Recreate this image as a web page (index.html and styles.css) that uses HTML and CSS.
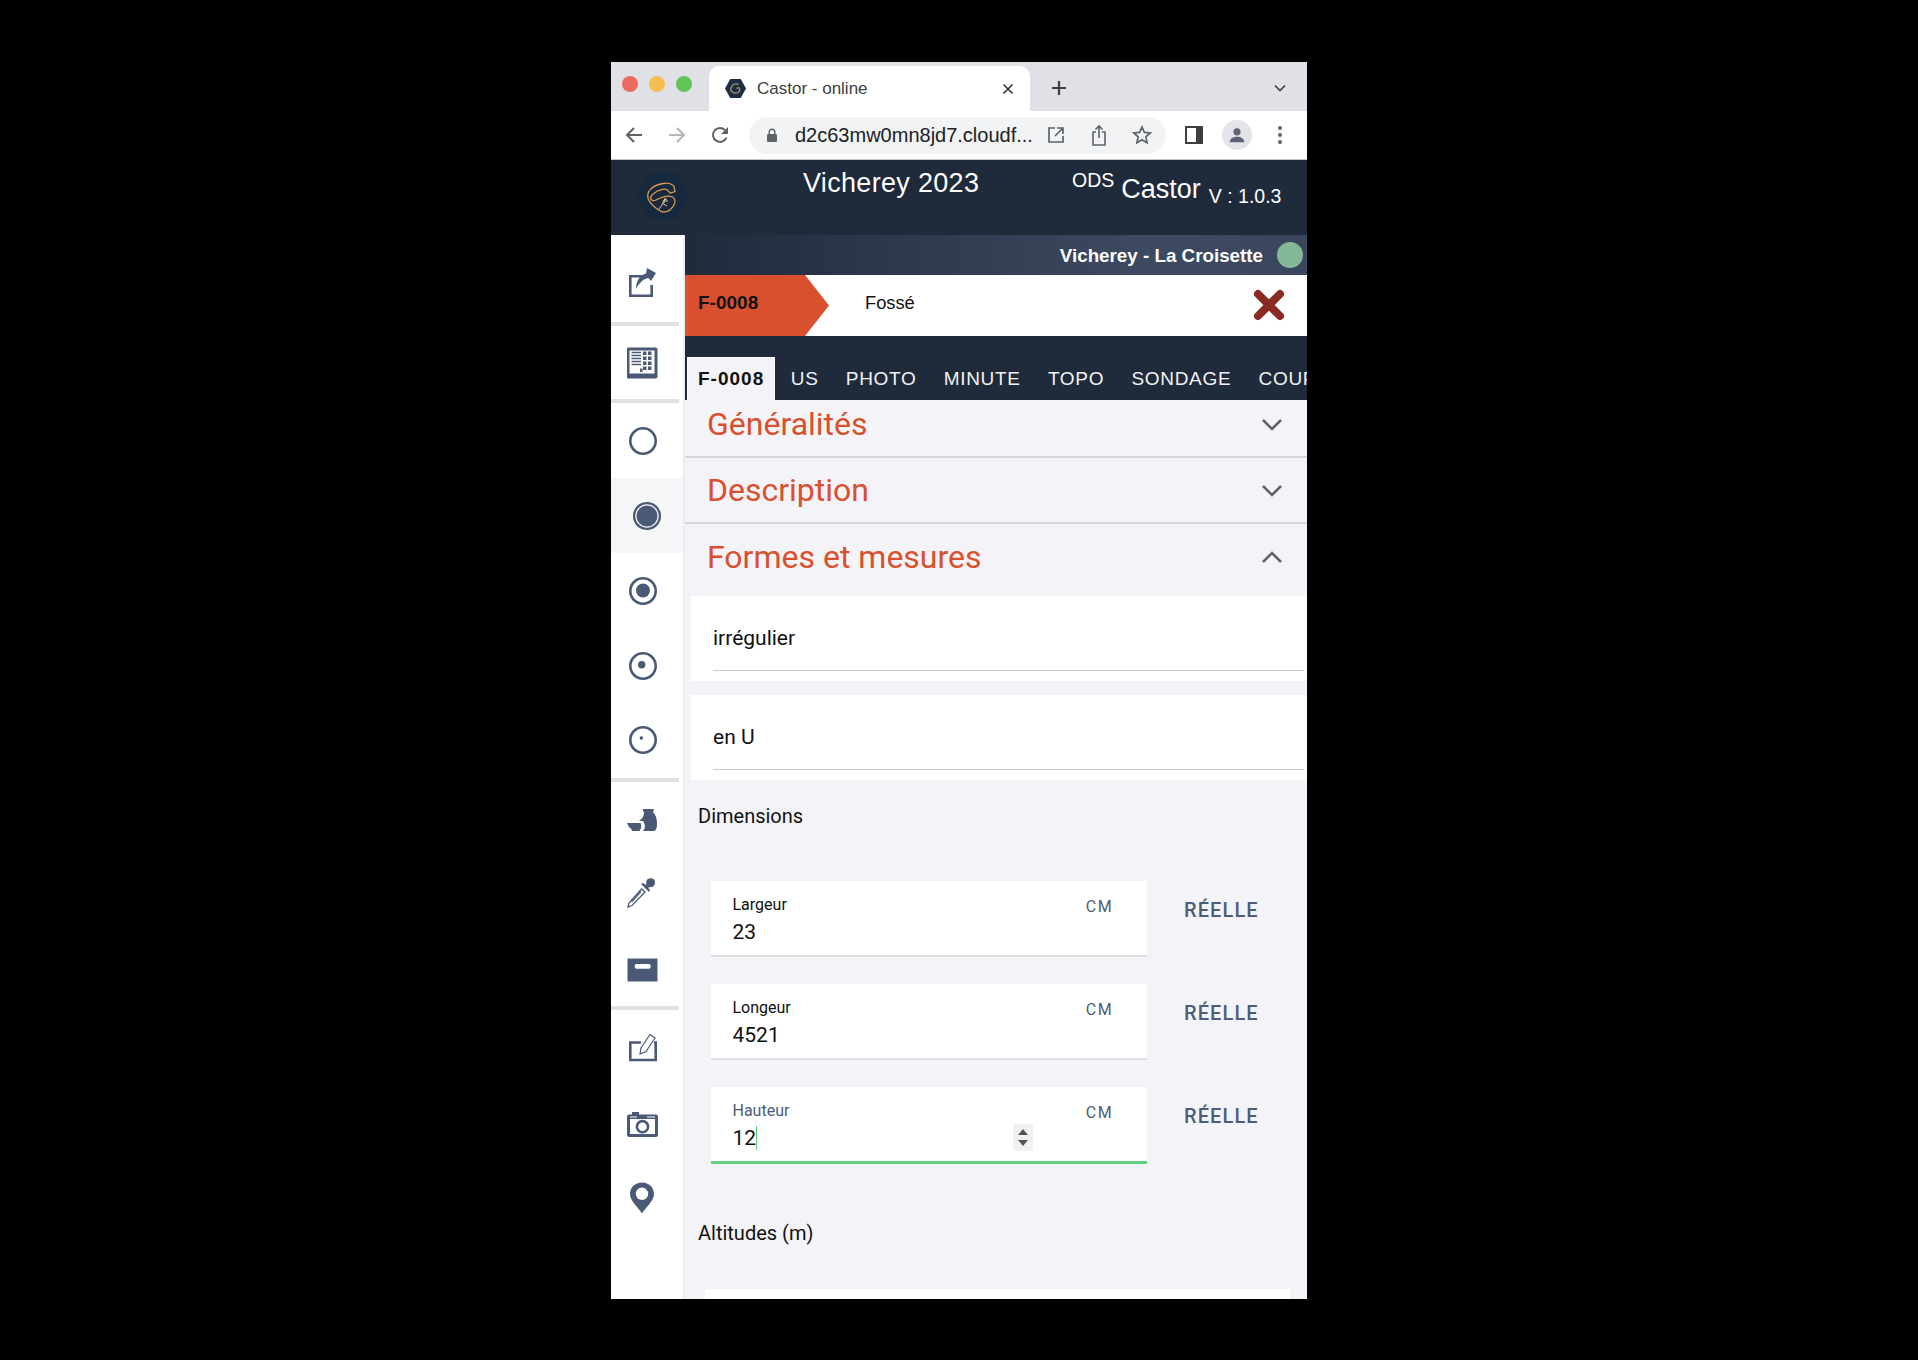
FILE: index.html
```html
<!DOCTYPE html>
<html lang="fr">
<head>
<meta charset="utf-8">
<title>Castor - online</title>
<link rel="stylesheet" href="styles.css">
</head>
<body>
<div class="window">
  <div class="tabstrip">
    <div class="lights"><i class="light red"></i><i class="light yellow"></i><i class="light green"></i></div>
    <div class="browser-tab">
      <svg class="favicon" viewBox="0 0 20 20"><path d="M5 1h10l5 9-5 9H5L0 10z" fill="#1b2e46"/><path d="M13 6c-3-1-6 0-7 3-1 2 0 4 2 5 3 1 6 0 6-3 0-2-2-2-3-1" fill="none" stroke="#a88a62" stroke-width="1.400"/></svg>
      <span class="browser-tab-title">Castor - online</span>
      <svg class="tab-close" viewBox="0 0 12 12"><path d="M1.500 1.500l9 9M10.500 1.500l-9 9" stroke="#333" stroke-width="1.600"/></svg>
    </div>
    <svg class="new-tab" viewBox="0 0 16 16"><path d="M8 1v14M1 8h14" stroke="#3c4043" stroke-width="2.200"/></svg>
    <svg class="tab-menu" viewBox="0 0 12 8"><path d="M1 1.500l5 5 5-5" fill="none" stroke="#3c4043" stroke-width="1.700"/></svg>
  </div>
  <div class="toolbar">
    <svg class="tool back" viewBox="0 0 20 20"><path d="M18 10H3M10 3l-7 7 7 7" fill="none" stroke="#5f6368" stroke-width="2"/></svg>
    <svg class="tool forward" viewBox="0 0 20 20"><path d="M2 10h15M10 3l7 7-7 7" fill="none" stroke="#b4b7bb" stroke-width="2"/></svg>
    <svg class="tool reload" viewBox="0 0 20 20"><path d="M16.500 12.500A7 7 0 1 1 15 5" fill="none" stroke="#5f6368" stroke-width="2"/><path d="M18 2v7h-7z" fill="#5f6368"/></svg>
    <div class="omnibox">
      <svg class="lock" viewBox="0 0 12 14"><path d="M3.200 6V4a2.800 2.800 0 0 1 5.600 0v2" fill="none" stroke="#5f6368" stroke-width="1.400"/><rect x="1" y="6" width="10" height="8" rx="1.200" fill="#5f6368"/></svg>
      <span class="url">d2c63mw0mn8jd7.cloudf...</span>
      <svg class="omni-icon open" viewBox="0 0 18 18"><path d="M8 2H2v14h14v-6M10 2h6v6M16 2L8 10" fill="none" stroke="#5f6368" stroke-width="1.700"/></svg>
      <svg class="omni-icon share" viewBox="0 0 16 22"><path d="M5 8H2v13h12V8h-3M8 14V2M4.500 5.500L8 2l3.500 3.500" fill="none" stroke="#5f6368" stroke-width="1.600"/></svg>
      <svg class="omni-icon star" viewBox="0 0 20 20"><path d="M10 2l2.400 5.400 5.800.6-4.400 3.900 1.300 5.800L10 14.700l-5.100 3 1.300-5.800L1.800 8l5.800-.6z" fill="none" stroke="#5f6368" stroke-width="1.700"/></svg>
    </div>
    <svg class="tool panel" viewBox="0 0 18 18"><path d="M1 1h16v16H1z" fill="none" stroke="#3c4043" stroke-width="2"/><path d="M11 1h6v16h-6z" fill="#3c4043"/></svg>
    <div class="avatar"><svg viewBox="0 0 20 20"><circle cx="10" cy="6.500" r="4" fill="#5b6475"/><path d="M2 18c0-4 4-6 8-6s8 2 8 6z" fill="#5b6475"/></svg></div>
    <svg class="tool dots" viewBox="0 0 4 20"><circle cx="2" cy="3" r="2" fill="#5f6368"/><circle cx="2" cy="10" r="2" fill="#5f6368"/><circle cx="2" cy="17" r="2" fill="#5f6368"/></svg>
  </div>

  <header class="app-header">
    <svg class="logo" viewBox="0 0 52 46">
      <path d="M13 0h26l13 23-13 23H13L0 23z" fill="#17293f"/>
      <path d="M36.700 12.700C34 10.500 30 9.500 26 10.500 20 11.500 14 14 11.500 19 9 24 11 28 16.700 33.300 20 36 23 38.500 26.700 39 31 39 35 36 37.500 31 39 27 37 23.500 33.300 23.300 29 22.800 24 24.500 19 27 16 28.500 14 27 13.500 25 13.500 22 17 20 21 17.800 25 16 28 15.500 30 16.700L33.300 20 38 18.500 36.700 12.700z" fill="none" stroke="#d99a4e" stroke-width="1.300"/>
      <path d="M22 36l3-4 2-5 3-1M25 30l5 3M26 28h5M28 25l-1 5" fill="none" stroke="#e6c08e" stroke-width="1"/>
    </svg>
    <span class="app-title">Vicherey 2023</span>
    <span class="ods">ODS</span>
    <span class="castor">Castor</span>
    <span class="version">V : 1.0.3</span>
  </header>

  <div class="app-body">
    <nav class="sidebar">
      <div class="nav-item">
        <svg class="nav-icon" viewBox="0 0 32 32"><path d="M15 9.300H3.300v19.400h21.400V18" fill="none" stroke="#4a5a76" stroke-width="2.600"/><path d="M9 22C9 14 13 8 19 6.500L20 1l9 5-5 8-2.500-3C16 12 12 16 9 22z" fill="#4a5a76"/></svg>
      </div>
      <div class="nav-sep"></div>
      <div class="nav-item">
        <svg class="nav-icon" viewBox="0 0 32 32"><g transform="translate(-1 0)"><rect x=".5" y=".5" width="31" height="31" rx="2" fill="#4a5a76"/><rect x="3.500" y="3.500" width="25" height="23" fill="#fff"/><path d="M5.500 5.500H15M5.500 8.500H15M5.500 11.500H15M5.500 14.500H15M5.500 17.500H15" stroke="#4a5a76" stroke-width="1.500"/><path d="M17 4.500h3.500V8H17zM22 4.500h3.500V8H22zM17 9.500h3.500V13H17zM22 9.500h3.500V13H22zM17 14.500h3.500V18H17zM22 14.500h3.500V18H22zM17 19.500h3.500V23H17zM22 19.500h3.500V23H22zM14 21.500h2.500V25H14z" fill="#4a5a76"/></g></svg>
      </div>
      <div class="nav-sep"></div>
      <div class="nav-item">
        <svg class="nav-icon" viewBox="0 0 32 32"><circle cx="16" cy="16" r="12.700" fill="none" stroke="#4a5a76" stroke-width="2.600"/></svg>
      </div>
      <div class="nav-item active">
        <svg class="nav-icon" viewBox="0 0 32 32"><circle cx="16" cy="16" r="12.900" fill="none" stroke="#4a5a76" stroke-width="2.300"/><circle cx="16" cy="16" r="10.500" fill="#4a5a76"/></svg>
      </div>
      <div class="nav-item">
        <svg class="nav-icon" viewBox="0 0 32 32"><circle cx="16" cy="16" r="12.700" fill="none" stroke="#4a5a76" stroke-width="2.600"/><circle cx="16" cy="15.500" r="7" fill="#4a5a76"/></svg>
      </div>
      <div class="nav-item">
        <svg class="nav-icon" viewBox="0 0 32 32"><circle cx="16" cy="16" r="12.700" fill="none" stroke="#4a5a76" stroke-width="2.600"/><circle cx="14.700" cy="14.700" r="3.700" fill="#4a5a76"/></svg>
      </div>
      <div class="nav-item">
        <svg class="nav-icon" viewBox="0 0 32 32"><circle cx="16" cy="16" r="12.700" fill="none" stroke="#4a5a76" stroke-width="2.600"/><circle cx="14.400" cy="14" r="1.800" fill="#4a5a76"/></svg>
      </div>
      <div class="nav-sep"></div>
      <div class="nav-item">
        <svg class="nav-icon" viewBox="0 0 32 32"><path d="M15.500 6H27l-1 3c3 3 4 7 4 12 0 4-1 6-2.500 7H16c3-3 2-8 0-10h-4c3-2 5-5 5-8z" fill="#4a5a76"/><path d="M0 20h13.500c1.500 3 .5 6-1 8H5l-1-2.500C2 25 1 22 0 20z" fill="#4a5a76"/></svg>
      </div>
      <div class="nav-item">
        <svg class="nav-icon" viewBox="0 0 32 32"><g transform="translate(-3 0)"><path d="M17.500 13L5 27l-1 4 4-1.500L21 16z" fill="#fff" stroke="#4a5a76" stroke-width="1.300"/><path d="M7.500 26L17 15.500" stroke="#4a5a76" stroke-width="1.200"/><path d="M17 8l2-1 3 2 .5-4.500C24 2 28 1.500 30 3.500c2 2.500 1 6.500-2 7.500l-4 .5 2 2.500-1 2z" fill="#4a5a76"/></g></svg>
      </div>
      <div class="nav-item">
        <svg class="nav-icon" viewBox="0 0 32 32"><path d="M.5 6.500H30.500V29.500H.5z" fill="#4a5a76"/><rect x="7.700" y="12" width="16" height="4.700" rx="2" fill="#fff"/></svg>
      </div>
      <div class="nav-sep"></div>
      <div class="nav-item">
        <svg class="nav-icon" viewBox="0 0 32 32"><path d="M14 10.500H3.300V28h25.400V10.500H27" fill="none" stroke="#4a5a76" stroke-width="2.600"/><path d="M13 22l1-6 9-13.500 5 3.500-9 13.500z" fill="#fff" stroke="#4a5a76" stroke-width="1.200"/></svg>
      </div>
      <div class="nav-item">
        <svg class="nav-icon" viewBox="0 0 32 32"><path d="M2 7.500h3V5h7v2.500h17a2 2 0 0 1 2 2V28a2 2 0 0 1-2 2H2a2 2 0 0 1-2-2V9.500a2 2 0 0 1 2-2z" fill="#4a5a76"/><path d="M3 12h25v15H3z" fill="#fff"/><path d="M3 10h7M20 10h8" stroke="#fff" stroke-width="1"/><circle cx="15.500" cy="19.700" r="5.600" fill="#fff" stroke="#4a5a76" stroke-width="2.600"/></svg>
      </div>
      <div class="nav-item">
        <svg class="nav-icon" viewBox="0 0 32 32"><path d="M15 .5C8 .5 3 5.500 3 12c0 7 8 13 12 19.500C19 25 27 19 27 12 27 5.500 22 .5 15 .5z" fill="#4a5a76"/><circle cx="15" cy="11.800" r="6.200" fill="#fff"/></svg>
      </div>
    </nav>

    <main class="content">
      <div class="site-bar">
        <span class="site-name">Vicherey - La Croisette</span>
        <i class="site-dot"></i>
      </div>
      <div class="record-bar">
        <div class="record-id">F-0008</div>
        <span class="record-type">Fossé</span>
        <svg class="record-close" viewBox="0 0 32 32"><path d="M5 5l22 22M27 5L5 27" stroke="#8a2b23" stroke-width="8" stroke-linecap="round"/></svg>
      </div>
      <div class="tabs">
        <span class="tab current">F-0008</span>
        <span class="tab">US</span>
        <span class="tab">PHOTO</span>
        <span class="tab">MINUTE</span>
        <span class="tab">TOPO</span>
        <span class="tab">SONDAGE</span>
        <span class="tab">COUPE</span>
      </div>

      <section class="panel-head first">
        <h2>Généralités</h2>
        <svg class="chev" viewBox="0 0 22 13"><path d="M2 2l9 9 9-9" fill="none" stroke="#5f6368" stroke-width="2.600"/></svg>
      </section>
      <section class="panel-head">
        <h2>Description</h2>
        <svg class="chev" viewBox="0 0 22 13"><path d="M2 2l9 9 9-9" fill="none" stroke="#5f6368" stroke-width="2.600"/></svg>
      </section>
      <section class="panel-head open-panel">
        <h2>Formes et mesures</h2>
        <svg class="chev" viewBox="0 0 22 13"><path d="M2 11l9-9 9 9" fill="none" stroke="#5f6368" stroke-width="2.600"/></svg>
      </section>

      <div class="select-field"><span class="select-value">irrégulier</span></div>
      <div class="select-field second"><span class="select-value">en U</span></div>

      <div class="group-label">Dimensions</div>

      <div class="measure tight">
        <div class="measure-card">
          <div class="measure-input"><label>Largeur</label><span class="measure-value">23</span></div>
          <span class="unit">CM</span>
        </div>
        <span class="measure-kind">RÉELLE</span>
      </div>
      <div class="measure">
        <div class="measure-card">
          <div class="measure-input"><label>Longeur</label><span class="measure-value">4521</span></div>
          <span class="unit">CM</span>
        </div>
        <span class="measure-kind">RÉELLE</span>
      </div>
      <div class="measure">
        <div class="measure-card focused">
          <div class="measure-input"><label>Hauteur</label><span class="measure-value"><span class="caret-text">12</span></span></div>
          <div class="spinner"><i class="up"></i><i class="down"></i></div>
          <span class="unit">CM</span>
        </div>
        <span class="measure-kind">RÉELLE</span>
      </div>

      <div class="group-label altitudes">Altitudes (m)</div>
      <div class="next-card"></div>
    </main>
  </div>
</div>
</body>
</html>
```
FILE: styles.css
```css
* { box-sizing: border-box; }
html, body { margin: 0; background: #000; }
body { padding: 62px 0 61px 611px; font-family: "Liberation Sans", Arial, sans-serif; }
.window { width: 696px; height: 1237px; background: #fff; overflow: hidden; display: flex; flex-direction: column; }

.tabstrip { height: 49px; background: #dfe1e6; display: flex; align-items: flex-start; flex: none; }
.lights { display: flex; gap: 11px; padding: 14px 0 0 11px; width: 98px; flex: none; }
.light { width: 16px; height: 16px; border-radius: 50%; display: block; }
.red { background: #ec6a5e; } .yellow { background: #f4bf4f; } .green { background: #61c554; }
.browser-tab { margin-top: 4px; width: 321px; height: 45px; background: #fff; border-radius: 10px 10px 0 0; display: flex; align-items: center; padding: 0 16px 0 16px; flex: none; }
.favicon { width: 21px; height: 21px; flex: none; }
.browser-tab-title { font-size: 17px; color: #3c4043; margin-left: 11px; flex: 1; }
.tab-close { width: 12px; height: 12px; }
.new-tab { width: 16px; height: 16px; margin: 18px 0 0 21px; flex: none; }
.tab-menu { width: 12px; height: 8px; margin: 22px 0 0 207px; flex: none; }

.toolbar { height: 49px; background: #fff; border-bottom: 1px solid #c4c7cb; display: flex; align-items: center; flex: none; padding-left: 13px; }
.tool { flex: none; }
.back, .forward, .reload { width: 20px; height: 20px; margin-right: 23px; }
.omnibox { width: 417px; height: 37px; border-radius: 19px; background: #f1f3f4; display: flex; align-items: center; padding-left: 17px; flex: none; margin-left: -4px; }
.lock { width: 12px; height: 14px; flex: none; }
.url { font-size: 20px; color: #202124; margin-left: 17px; width: 236px; white-space: nowrap; flex: none; }
.omni-icon { flex: none; }
.open { width: 18px; height: 18px; margin-left: 16px; }
.share { width: 16px; height: 22px; margin-left: 26px; }
.star { width: 20px; height: 20px; margin-left: 25px; }
.panel { width: 18px; height: 18px; margin-left: 19px; }
.avatar { width: 30px; height: 30px; border-radius: 50%; background: #e2e4e9; margin-left: 19px; padding: 6px; flex: none; }
.avatar svg { display: block; width: 18px; height: 18px; }
.dots { width: 4px; height: 20px; margin-left: 26px; }

.app-header { height: 75px; background: #1f2a3b; display: flex; flex: none; color: #fff; white-space: nowrap; align-items: flex-start; }
.logo { width: 52px; height: 46px; margin: 13px 0 0 26px; flex: none; }
.app-title { font-size: 27px; letter-spacing: .32px; margin: 8px 0 0 114px; width: 269px; flex: none; }
.ods { font-size: 19.500px; margin-top: 9px; }
.castor { font-size: 27px; margin: 14px 0 0 7px; }
.version { font-size: 19.500px; margin: 25px 0 0 8px; }

.app-body { flex: 1; display: flex; min-height: 0; }
.sidebar { width: 74px; flex: none; background: #fff; border-right: 2px solid #ecedf1; display: grid;
  grid-template-rows: 87px 4px 73px 4px 75px 75px 76px 73px 76px 4px 73px 74px 77px 4px 75px 76px 73px; align-content: start; }
.nav-item { display: flex; align-items: center; justify-content: center; padding-right: 8px; }
.nav-item:first-child { padding-top: 8px; }
.nav-item.active { padding-right: 0; background: #f6f6f8; }
.nav-sep { background: #e1e1e1; margin-right: 4px; }
.nav-icon { width: 32px; height: 32px; display: block; flex: none; }

.content { flex: 1; min-width: 0; background: #f4f4f8; overflow: hidden; font-family: Roboto, sans-serif; }
.site-bar { height: 40px; background: linear-gradient(90deg, #1f2a3b 0%, #3d4a61 75%, #3a465c 100%); display: flex; align-items: center; justify-content: flex-end; padding: 2px 4px 0 0; font-family: "Liberation Sans", sans-serif; }
.site-name { font-size: 18.800px; font-weight: 700; color: #fff; }
.site-dot { width: 26px; height: 26px; border-radius: 50%; background: #84b898; margin: -2px 0 0 14px; }
.record-bar { height: 61px; background: #fff; display: flex; align-items: center; position: relative; font-family: "Liberation Sans", sans-serif; padding-right: 22px; }
.record-id { width: 144px; height: 100%; background: #d9502e; clip-path: polygon(0 0, 120px 0, 100% 50%, 120px 100%, 0 100%); font-size: 19px; font-weight: 700; color: #111; display: flex; align-items: center; padding: 0 0 6px 13px; flex: none; }
.record-type { font-size: 18.300px; color: #111; margin: 0 0 6px 36px; flex: 1; }
.record-close { width: 32px; height: 32px; flex: none; margin-bottom: 2px; }
.tabs { height: 64px; background: #1f2a3b; display: flex; align-items: flex-end; overflow: hidden; padding-left: 2px; font-family: "Liberation Sans", sans-serif; white-space: nowrap; }
.tab { font-size: 19px; letter-spacing: .7px; color: #f2f2f4; padding: 0 13.600px; height: 43px; display: flex; align-items: center; flex: none; }
.tab.current { background: #f4f4f8; color: #111; font-weight: 700; letter-spacing: 1px; padding: 0 11px 0 10px; margin-right: 2px; border-top: 1px solid #fff; border-left: 1px solid #fff; }

.panel-head { height: 66px; display: flex; align-items: center; justify-content: space-between; padding: 0 24px 0 18px; border-bottom: 2px solid #d6d6da; }
.panel-head.first { height: 58px; padding-bottom: 8px; }
.panel-head.open-panel { border-bottom: 0; height: 72px; padding-bottom: 6px; }
.panel-head h2 { margin: 0 0 0 4px; font-size: 32px; font-weight: 400; color: #d9502e; }
.chev { width: 22px; height: 13px; flex: none; }

.select-field { height: 85px; margin-left: 6px; background: #fff; padding: 0 3px 0 22px; }
.select-field.second { margin-top: 14px; }
.select-value { display: block; height: 74.500px; line-height: 84px; border-bottom: 1px solid #c9c9cc; font-size: 21px; color: #111; }

.group-label { font-size: 20px; color: #111; padding: 24px 0 0 13px; height: 101px; }
.group-label.altitudes { padding-top: 31px; height: 99.500px; }
.measure { display: flex; align-items: flex-start; height: 103px; padding-left: 26px; }
.measure.tight { height: 102.500px; }
.measure-card { width: 436px; height: 76px; background: #fff; border-bottom: 2px solid #dfdfe2; display: flex; align-items: flex-start; padding: 14px 34px 0 21.500px; position: relative; }
.measure-card.focused { border-bottom: 3px solid #62d07f; height: 77px; }
.measure-input { flex: 1; display: flex; flex-direction: column; }
.measure-input label { font-size: 16px; color: #111; line-height: 20px; }
.focused .measure-input label { color: #4d5d78; }
.measure-value { font-size: 21px; color: #111; line-height: 26px; margin-top: 4px; }
.caret-text { border-right: 1px solid #62d07f; }
.unit { font-size: 16px; letter-spacing: 1.400px; color: #4d5d78; line-height: 20px; margin-top: 2px; }
.spinner { position: absolute; left: 302px; top: 37px; width: 20px; height: 27px; background: #f1f1f1; display: flex; flex-direction: column; align-items: center; justify-content: center; gap: 5px; }
.spinner i { display: block; width: 0; height: 0; border-left: 5px solid transparent; border-right: 5px solid transparent; }
.spinner .up { border-bottom: 6px solid #555; }
.spinner .down { border-top: 6px solid #555; }
.measure-kind { font-size: 20px; font-weight: 500; letter-spacing: 1.100px; color: #4d5d78; margin: 18px 0 0 37px; line-height: 22px; }
.next-card { height: 20px; margin: 0 17px 0 20px; background: #fff; }
```
